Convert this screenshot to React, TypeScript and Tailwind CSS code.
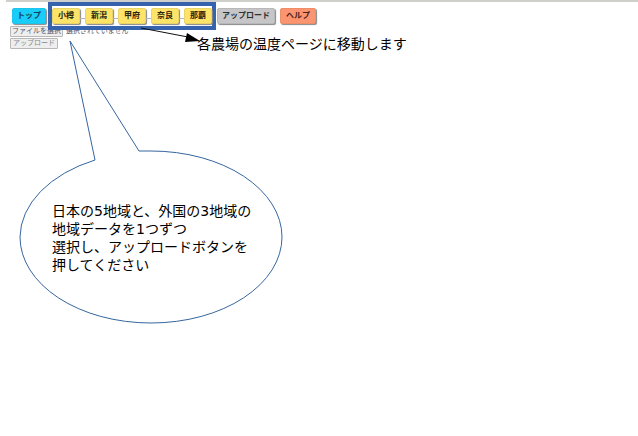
const farms = ["小樽", "新潟", "甲府", "奈良", "那覇"];

const linkBase =
  "flex h-4 items-center justify-center rounded-[2px] border text-[8px] leading-none font-bold shadow-[1px_1px_1px_#888888]";

function FarmLinks() {
  return (
    <div className="relative z-10 flex border-4 border-[#3563ad] py-[2px]">
      {farms.map((name, i) => (
        <div key={name} className="flex items-end">
          {i > 0 && <span className="mb-[5px] h-px w-[5px] bg-[#b4b4c8]" />}
          <a href="#" className={`${linkBase} w-7 border-[#e8d468] bg-[#fde368] text-[#2b260c]`}>
            {name}
          </a>
        </div>
      ))}
    </div>
  );
}

function UploadForm() {
  const control =
    "flex h-[11px] items-center justify-center rounded-[1px] border border-[#b8b8b8] bg-[#eeeeee] text-[7px] leading-none";
  return (
    <form className="-mt-1 flex flex-col items-start gap-px pl-[10px]" onSubmit={(e) => e.preventDefault()}>
      <div className="flex items-center gap-[3px] text-[#555566]">
        <input id="data-file" type="file" className="sr-only" />
        <label htmlFor="data-file" className={`${control} w-[53px]`}>
          ファイルを選択
        </label>
        <span className="text-[7px] leading-none whitespace-nowrap">選択されていません</span>
      </div>
      <button type="submit" className={`${control} w-12 text-[#888888]`}>
        アップロード
      </button>
    </form>
  );
}

function PageArrow() {
  return (
    <div className="absolute top-7 left-[141px] z-20 flex items-start">
      <svg width="56" height="16" viewBox="0 0 56 16" className="shrink-0 overflow-visible" aria-hidden="true">
        <path d="M0 0 L47 9" stroke="#111111" strokeWidth="1" />
        <path d="M46 5 L59 13 L44 14 Z" fill="#000000" />
      </svg>
      <p className="pt-[7px] text-[14px] leading-[18px] whitespace-nowrap">各農場の温度ページに移動します</p>
    </div>
  );
}

function Callout() {
  return (
    <div className="absolute top-10 left-5 h-[284px] w-[262px]">
      <svg width="262" height="284" viewBox="0 0 262 284" className="absolute inset-0 overflow-visible" aria-hidden="true">
        <path
          d="M50 1 L75 120 A131 86 0 0 0 0 197 A131 86 0 0 0 262 197 A131 86 0 0 0 131 111 L119 111 Z"
          fill="none"
          stroke="#36669f"
          strokeWidth="1"
        />
      </svg>
      <p className="relative pt-[162px] pl-8 text-[14px] leading-[18px] whitespace-nowrap">
        日本の5地域と、外国の3地域の
        <br />
        地域データを1つずつ
        <br />
        選択し、アップロードボタンを
        <br />
        押してください
      </p>
    </div>
  );
}

export default function App() {
  return (
    <main
      lang="ja"
      className="relative min-h-screen bg-white font-['DejaVu_Sans','Noto_Sans_CJK_JP',sans-serif] text-black"
    >
      <div className="ml-[6px] h-[2px] bg-[#cfcfcb]" />
      <nav className="flex items-center pl-3">
        <a href="#" className={`${linkBase} mr-[2px] w-[34px] border-[#20c4ea] bg-[#18cdf8] text-[#123c58]`}>
          トップ
        </a>
        <FarmLinks />
        <a href="#" className={`${linkBase} ml-px w-[58px] border-[#b8b8b8] bg-[#c6c5c7] text-[#303030]`}>
          アップロード
        </a>
        <a href="#" className={`${linkBase} ml-[5px] w-9 border-[#ee8e68] bg-[#fb9470] text-[#4c2018]`}>
          ヘルプ
        </a>
      </nav>
      <UploadForm />
      <PageArrow />
      <Callout />
    </main>
  );
}
